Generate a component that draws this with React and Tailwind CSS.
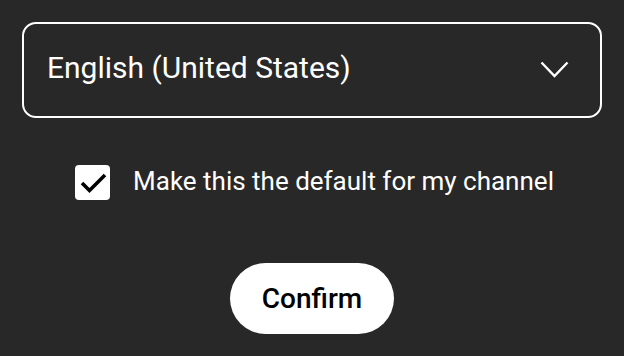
import { useState } from 'react';

function ChevronDown() {
  return (
    <svg width="29" height="18" viewBox="0 0 29 18" fill="none" stroke="white" strokeWidth="2.4">
      <path d="M1.5 1.5 L14.5 15 L27.5 1.5" />
    </svg>
  );
}

export default function App() {
  const [checked, setChecked] = useState(true);

  return (
    <div className="w-[624px] h-[356px] bg-[#282828] flex flex-col items-center pt-[22px] font-['Roboto',sans-serif] text-white">
      {/* Language select */}
      <button className="w-[580px] h-[96px] border-2 border-white rounded-[14px] flex items-center justify-between pl-[23px] pr-[31px]">
        <span className="text-[30px] leading-[36px] mb-[4px]">English (United States)</span>
        <ChevronDown />
      </button>

      {/* Default checkbox */}
      <label className="mt-[46px] ml-[5px] flex items-center gap-[23px] cursor-pointer">
        <span
          onClick={() => setChecked(!checked)}
          className="w-[35px] h-[35px] bg-white rounded-[4px] flex items-center justify-center"
        >
          {checked && (
            <svg width="35" height="35" viewBox="0 0 35 35" fill="none" stroke="black" strokeWidth="3.6">
              <path d="M7 24 L14.5 31.5 L30 16" transform="translate(0 -6)" />
            </svg>
          )}
        </span>
        <span className="text-[26px] leading-[35px] mb-[1px]">Make this the default for my channel</span>
      </label>

      {/* Confirm */}
      <button className="mt-[63px] w-[164px] h-[71px] bg-white rounded-full text-black text-[28px] font-medium">
        Confirm
      </button>
    </div>
  );
}
